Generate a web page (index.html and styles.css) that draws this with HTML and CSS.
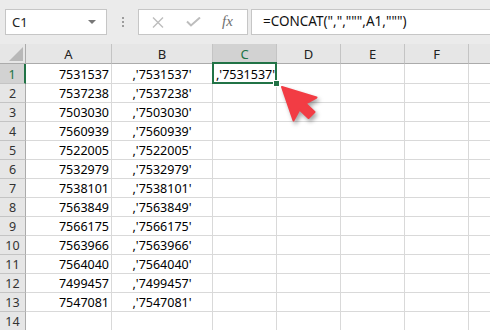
FILE: index.html
```html
<!DOCTYPE html>
<html lang="en">
<head>
    <meta charset="UTF-8">
    <meta name="viewport" content="width=device-width, initial-scale=1.0">
    <title>CONCAT sheet</title>
    <link rel="stylesheet" href="styles.css">
</head>
<body>

<div class="toolbar">
    <div class="namebox">
        <span>C1</span>
        <span class="caret"></span>
    </div>
    <div class="grip"><i></i><i></i><i></i></div>
    <div class="fxbuttons">
        <svg width="12" height="11" viewBox="0 0 12 11"><path d="M1 0.5 L11 10.5 M11 0.5 L1 10.5" stroke="#bdbdbd" stroke-width="1.4" fill="none"/></svg>
        <svg width="15" height="10" viewBox="0 0 15 10"><path d="M1 4.5 L5 8.5 L14 0.5" stroke="#bdbdbd" stroke-width="2" fill="none"/></svg>
        <span class="fx">fx</span>
    </div>
    <div class="formula">=CONCAT(",",""",A1,""")</div>
</div>

<div class="sheet" id="sheet"></div>

<svg class="pointer" width="50" height="50" viewBox="278 83 50 50">
    <polygon points="282,87 316.5,97.5 305.5,103.5 314.5,112 308.5,118 299.5,109.5 293.5,120.5" fill="#f23c44" stroke="#f23c44" stroke-width="2" stroke-linejoin="round"/>
</svg>

<script>
    const values = [7531537, 7537238, 7503030, 7560939, 7522005, 7532979, 7538101,
                    7563849, 7566175, 7563966, 7564040, 7499457, 7547081];
    const cols = ['A', 'B', 'C', 'D', 'E', 'F', ''];
    const sheet = document.getElementById('sheet');

    // Add one cell to the grid
    function addCell(cls, text) {
        const cell = document.createElement('div');
        cell.className = 'cell ' + cls;
        cell.textContent = text === undefined ? '' : text;
        sheet.appendChild(cell);
        return cell;
    }

    // Header row (column G is cut off by the window edge)
    const corner = addCell('corner');
    corner.innerHTML = '<svg width="14" height="14" viewBox="0 0 14 14"><polygon points="0,14 14,0 14,14" fill="#b8b8b8"/></svg>';
    cols.forEach(function (c) {
        addCell(c === 'C' ? 'colhdr active' : 'colhdr', c);
    });

    // Data rows
    for (let r = 1; r <= 14; r++) {
        const v = values[r - 1];
        addCell(r === 1 ? 'rowhdr active' : 'rowhdr', r);
        addCell('num', v || '');
        addCell('mid', v ? ",'" + v + "'" : '');
        if (r === 1) {
            const sel = addCell('left selected', ",'" + v + "'");
            sel.innerHTML += '<span class="handle"></span>';
        } else {
            addCell('');
        }
        addCell('');
        addCell('');
        addCell('');
        addCell('last');
    }
</script>

</body>
</html>
```

FILE: styles.css
```css
body {
    margin: 0;
    background-color: #ffffff;
    font-family: "Noto Sans", "Open Sans", sans-serif;
    color: #000000;
    width: 490px;
    height: 330px;
    overflow: hidden;
    position: relative;
}
.toolbar {
    height: 44px;
    box-sizing: border-box;
    padding: 9px 0 0 5px;
    background-color: #ebebeb;
    display: flex;
    align-items: flex-start;
}
.namebox {
    width: 102px;
    height: 26px;
    box-sizing: border-box;
    background-color: #ffffff;
    border: 1px solid #c6c6c6;
    display: flex;
    align-items: center;
    justify-content: space-between;
    padding: 0 10px 1px 6px;
    font-size: 13px;
    color: #222;
}
.caret {
    width: 0;
    height: 0;
    border-left: 4px solid transparent;
    border-right: 4px solid transparent;
    border-top: 4px solid #777;
}
.grip {
    width: 31px;
    height: 26px;
    display: flex;
    flex-direction: column;
    align-items: center;
    justify-content: center;
    gap: 2px;
}
.grip i {
    width: 2px;
    height: 2px;
    background-color: #9c9c9c;
}
.fxbuttons {
    width: 110px;
    height: 26px;
    box-sizing: border-box;
    background-color: #ffffff;
    border: 1px solid #c6c6c6;
    display: flex;
    align-items: center;
    padding: 0 0 0 13px;
    gap: 22px;
}
.fx {
    font-family: "Liberation Serif", serif;
    font-style: italic;
    font-size: 15px;
    color: #707070;
    margin-left: -1px;
    padding-bottom: 2px;
}
.formula {
    flex: 1;
    height: 26px;
    box-sizing: border-box;
    margin-left: 3px;
    background-color: #ffffff;
    border: 1px solid #c6c6c6;
    border-right: none;
    padding: 2px 0 0 11px;
    font-size: 13.5px;
    color: #111;
    white-space: nowrap;
}
.sheet {
    display: grid;
    grid-template-columns: 26px 86px 101px 64px 64px 64px 64px 21px;
    grid-template-rows: 20px 20px repeat(13, 19px);
    font-size: 12.5px;
}
.cell {
    box-sizing: border-box;
    border-right: 1px solid #d9d9d9;
    border-bottom: 1px solid #d9d9d9;
    display: flex;
    align-items: center;
    white-space: nowrap;
    padding-top: 1px;
}
.cell:last-child,
.last {
    border-right: none;
}
.corner {
    background-color: #e6e6e6;
    border-right: 1px solid #ababab;
    border-bottom: 1px solid #ababab;
    align-items: flex-end;
    justify-content: flex-end;
    padding: 0 2px 2px 0;
}
.colhdr {
    background-color: #e6e6e6;
    border-right: 1px solid #c4c4c4;
    border-bottom: 1px solid #ababab;
    justify-content: center;
    color: #222;
    font-size: 13px;
}
.colhdr:nth-child(8) {
    border-right: none;
}
.rowhdr {
    background-color: #e6e6e6;
    border-right: 1px solid #ababab;
    border-bottom: 1px solid #c4c4c4;
    justify-content: center;
    color: #333;
}
.colhdr.active {
    background-color: #d2d2d2;
    color: #217346;
    border-bottom: 2px solid #217346;
}
.rowhdr.active {
    background-color: #d2d2d2;
    color: #217346;
    border-right: 2px solid #217346;
}
.num {
    justify-content: flex-end;
    padding-right: 2px;
}
.mid {
    justify-content: center;
}
.left {
    padding-left: 3px;
}
.selected {
    position: relative;
    overflow: visible;
}
.selected::after {
    content: "";
    position: absolute;
    top: -2px;
    left: -1px;
    right: -1px;
    bottom: -1px;
    border: 2px solid #217346;
}
.handle {
    position: absolute;
    right: -4px;
    bottom: -4px;
    width: 5px;
    height: 5px;
    background-color: #217346;
    border: 1px solid #ffffff;
    z-index: 1;
}
.pointer {
    position: absolute;
    left: 278px;
    top: 83px;
    filter: drop-shadow(2px 3px 2px rgba(0, 0, 0, 0.35));
}
```
